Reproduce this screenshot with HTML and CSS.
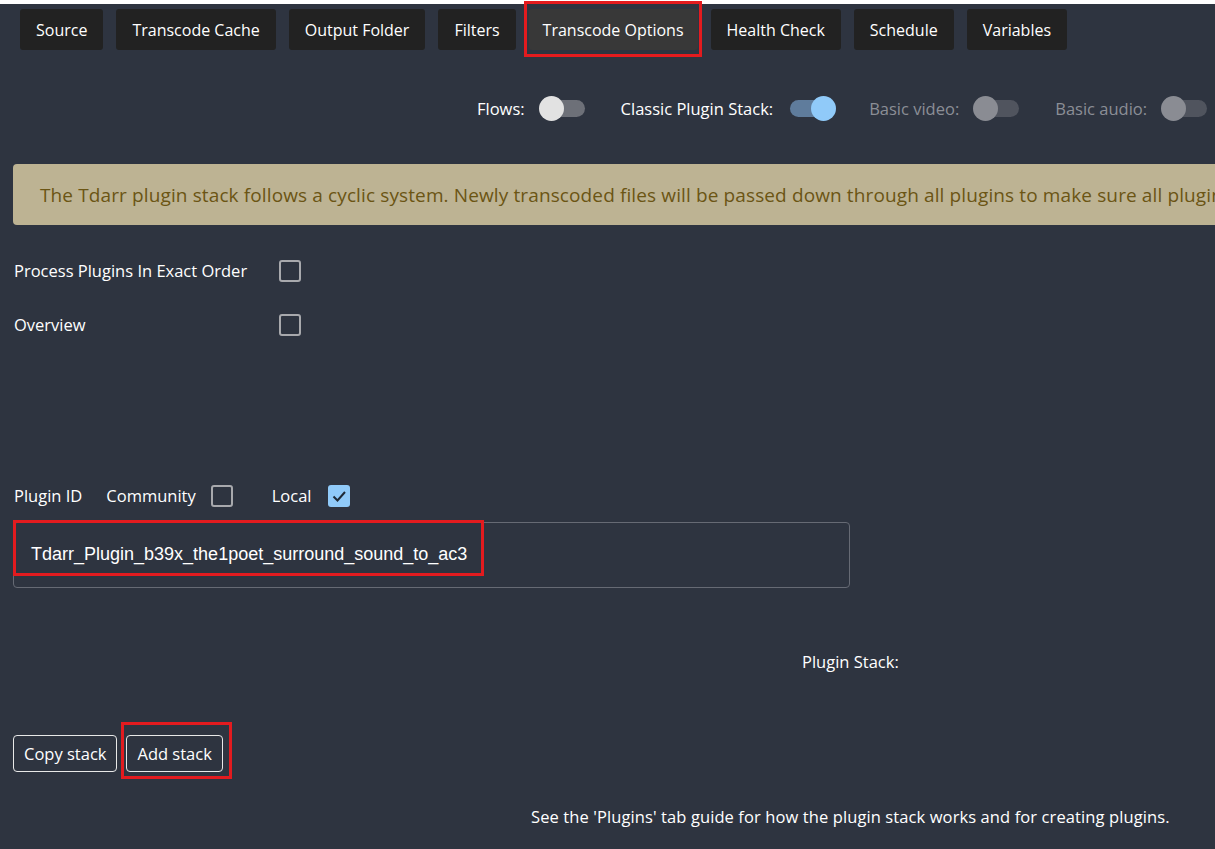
FILE: index.html
```html
<!DOCTYPE html>
<html>
<head>
<meta charset="utf-8">
<link rel="stylesheet" href="styles.css">
</head>
<body>
<div class="topstrip"></div>
<div class="page">
  <nav class="tabs">
    <button class="tab">Source</button>
    <button class="tab">Transcode Cache</button>
    <button class="tab">Output Folder</button>
    <button class="tab">Filters</button>
    <button class="tab active">Transcode Options<span class="mark mark-tab"></span></button>
    <button class="tab">Health Check</button>
    <button class="tab">Schedule</button>
    <button class="tab">Variables</button>
  </nav>

  <div class="toggles">
    <div class="tg"><span class="tg-label">Flows:</span><span class="switch"><span class="track"></span><span class="knob"></span></span></div>
    <div class="tg"><span class="tg-label">Classic Plugin Stack:</span><span class="switch on"><span class="track"></span><span class="knob"></span></span></div>
    <div class="tg disabled"><span class="tg-label">Basic video:</span><span class="switch"><span class="track"></span><span class="knob"></span></span></div>
    <div class="tg disabled"><span class="tg-label">Basic audio:</span><span class="switch"><span class="track"></span><span class="knob"></span></span></div>
  </div>

  <div class="alert">The Tdarr plugin stack follows a cyclic system. Newly transcoded files will be passed down through all plugins to make sure all plugin conditions are met.</div>

  <div class="opt-row first"><span class="opt-label">Process Plugins In Exact Order</span><span class="cb"></span></div>
  <div class="opt-row"><span class="opt-label">Overview</span><span class="cb"></span></div>

  <div class="pid-row">
    <span class="pid-label">Plugin ID</span>
    <span class="pid-label">Community</span><span class="cb"></span>
    <span class="pid-label local">Local</span><span class="cb checked"><svg viewBox="0 0 22 22" width="22" height="22"><path d="M5.5 11.5 L9.5 15.5 L17 7" fill="none" stroke="#1f2a36" stroke-width="2"/></svg></span>
  </div>

  <div class="input-box">
    <span class="input-text">Tdarr_Plugin_b39x_the1poet_surround_sound_to_ac3</span>
    <span class="mark mark-input"></span>
  </div>

  <div class="stack-label">Plugin Stack:</div>

  <div class="actions">
    <button class="obtn">Copy stack</button>
    <button class="obtn">Add stack<span class="mark mark-add"></span></button>
  </div>

  <div class="footnote">See the 'Plugins' tab guide for how the plugin stack works and for creating plugins.</div>
</div>
</body>
</html>
```

FILE: styles.css
```css
html, body {
  margin: 0;
  padding: 0;
  background: #2e3440;
  overflow: hidden;
  font-family: "Open Sans", "Noto Sans", sans-serif;
  color: #ffffff;
}
.topstrip {
  height: 4px;
  background: #ffffff;
}
.page {
  width: 1500px;
  height: 845px;
}
.tabs {
  display: flex;
  gap: 13px;
  padding-left: 20px;
  margin-top: 5px;
}
.tab {
  position: relative;
  height: 41px;
  padding: 0 16px;
  background: #222222;
  border: none;
  border-radius: 3px;
  color: #ffffff;
  font-family: inherit;
  font-size: 16px;
}
.tab.active {
  background: #383838;
  padding: 0 14px;
}
.mark {
  position: absolute;
  border: 3px solid #e31b1f;
  pointer-events: none;
}
.mark-tab {
  left: -5px; right: -4px; top: -8px; bottom: -7px;
}
.toggles {
  display: flex;
  align-items: center;
  padding-left: 477px;
  margin-top: 40px;
  height: 36px;
  gap: 33px;
}
.tg {
  display: flex;
  align-items: center;
  gap: 14px;
  font-size: 16.5px;
}
.tg.disabled .tg-label { color: #8b8e96; }
.switch {
  position: relative;
  width: 49px;
  height: 26px;
  display: inline-block;
}
.track {
  position: absolute;
  left: 3px; right: 3px; top: 5px; height: 17px;
  border-radius: 9px;
  background: #6d7078;
}
.knob {
  position: absolute;
  left: 0; top: 1px;
  width: 25px; height: 25px;
  border-radius: 50%;
  background: #e2e2e2;
}
.switch.on .track { background: #5f7c9c; }
.switch.on .knob { left: 24px; background: #90caf9; }
.tg.disabled .track { background: #50545e; }
.tg.disabled .knob { background: #8a8c93; }

.alert {
  margin: 38px 0 0 13px;
  height: 61px;
  display: flex;
  align-items: center;
  padding-left: 27px;
  background: #bdb393;
  border-radius: 4px;
  color: #6b5514;
  font-size: 19px;
  letter-spacing: 0.12px;
  white-space: nowrap;
}
.opt-row {
  display: flex;
  align-items: center;
  height: 24px;
  padding-left: 14px;
  font-size: 16.5px;
}
.opt-row.first { margin-top: 33px; }
.opt-row + .opt-row { margin-top: 30px; }
.opt-label { width: 265px; }
.opt-row .cb { margin-top: 2px; }
.cb {
  display: inline-flex;
  width: 18px;
  height: 18px;
  border: 2px solid #a8a9ad;
  border-radius: 3px;
  box-sizing: content-box;
}
.cb.checked {
  background: #90caf9;
  width: 22px; height: 22px;
  border: none;
  border-radius: 3px;
}
.pid-row {
  display: flex;
  align-items: center;
  height: 24px;
  margin-top: 147px;
  padding-left: 14px;
  font-size: 16.5px;
}
.pid-label { margin-right: 24px; }
.pid-label + .pid-label { margin-right: 15px; }
.pid-row .cb { margin-right: 39px; margin-top: 2px; }
.pid-row .cb.checked { margin-right: 0; }
.pid-row .local { margin-right: 16px; }
.input-box {
  position: relative;
  margin: 15px 0 0 13px;
  width: 835px;
  height: 64px;
  border: 1px solid #666a74;
  border-radius: 4px;
}
.input-text {
  position: absolute;
  left: 17px;
  top: 21px;
  font-family: "Liberation Sans", Arial, sans-serif;
  font-size: 18px;
  color: #ffffff;
}
.mark-input {
  left: -1px; top: -3px; width: 465px; height: 50px;
}
.stack-label {
  margin: 62px 0 0 802px;
  font-size: 16.5px;
  height: 24px;
}
.actions {
  display: flex;
  gap: 9px;
  margin: 61px 0 0 13px;
}
.obtn {
  position: relative;
  height: 37px;
  padding: 0 10px;
  background: transparent;
  border: 1px solid #e8e8e8;
  border-radius: 4px;
  color: #ffffff;
  font-family: inherit;
  font-size: 16.5px;
}
.mark-add {
  left: -6px; right: -10px; top: -14px; bottom: -8px;
}
.footnote {
  margin: 33px 0 0 531px;
  font-size: 16.5px;
  letter-spacing: 0.1px;
}
```
